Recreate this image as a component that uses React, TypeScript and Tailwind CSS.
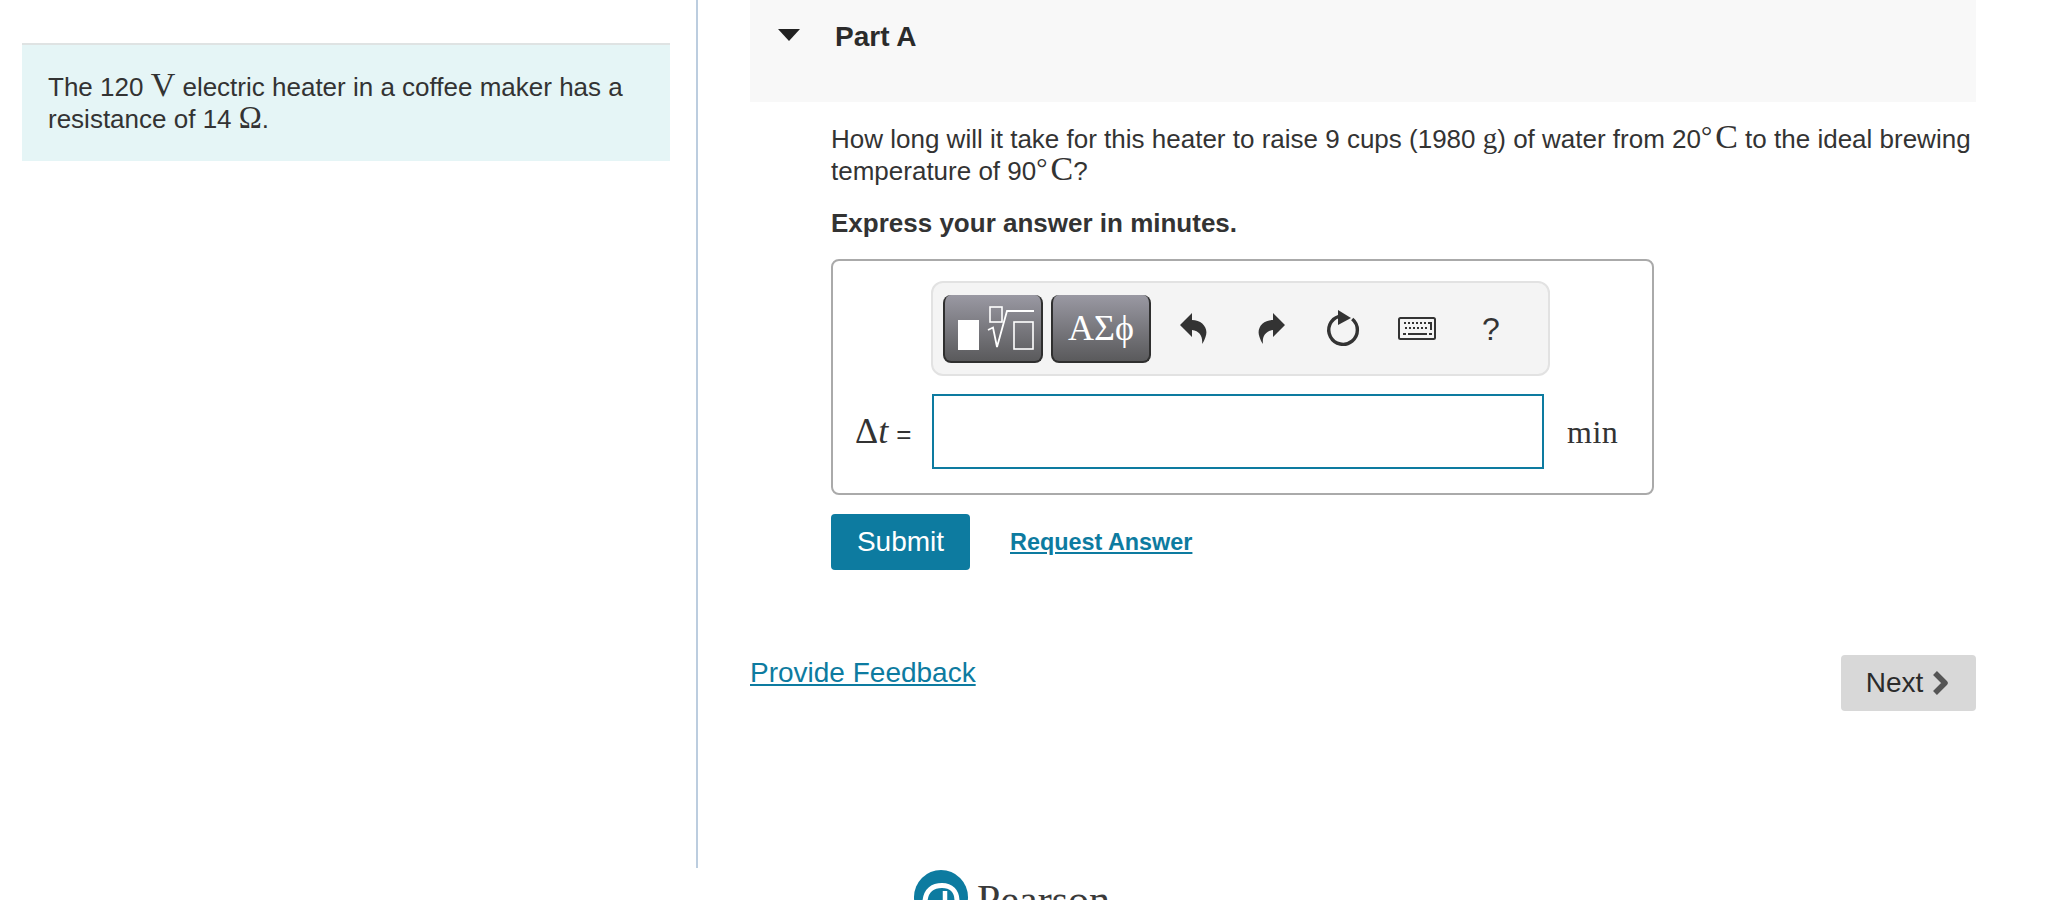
import React from "react";

const SANS = "font-['Liberation_Sans',Arial,sans-serif]";
const SERIF = "font-['Liberation_Serif','Times_New_Roman',serif]";

// Serif glyphs for units and variables inside the running text
function M({ children, size = "text-[34px]" }: { children: React.ReactNode; size?: string }) {
  return <span className={`${SERIF} ${size} leading-[0]`}>{children}</span>;
}

function Deg() {
  return <span className={`${SERIF} mr-[3px] align-[3px] text-[28px] leading-[0]`}>°</span>;
}

function UndoIcon({ flip }: { flip?: boolean }) {
  return (
    <svg width="27" height="31" viewBox="0 0 27 31" className={flip ? "-scale-x-100" : ""}>
      <path
        d="M0 12 L12 0 V7 C22 7 29 15 25.5 24 C24.5 27 23.5 29 22 31 C23 24 20 18 12 17 V24 Z"
        fill="#333"
      />
    </svg>
  );
}

function RefreshIcon() {
  return (
    <svg width="36" height="38" viewBox="0 0 36 38">
      <path d="M27.2 9 A14.3 14.3 0 1 1 14 6.3" fill="none" stroke="#333" strokeWidth="3.4" />
      <path d="M13 0 L26 8 L13 15 Z" fill="#333" />
    </svg>
  );
}

function KeyboardIcon() {
  const top = [6, 10, 14, 18, 22, 26, 30];
  return (
    <svg width="38" height="23" viewBox="0 0 38 23">
      <rect x="1" y="1" width="36" height="21" rx="1.5" fill="#f4f4f4" stroke="#333" strokeWidth="2" />
      {top.map((x) => (
        <rect key={x} x={x} y="5" width="2" height="2" fill="#333" />
      ))}
      {top.slice(0, 6).map((x) => (
        <rect key={x} x={x + 1} y="10" width="2" height="2" fill="#333" />
      ))}
      <rect x="32" y="5" width="2" height="8" fill="#333" />
      <rect x="5" y="16" width="3" height="2" fill="#333" />
      <rect x="10" y="16" width="19" height="2" fill="#333" />
      <rect x="31" y="16" width="3" height="2" fill="#333" />
    </svg>
  );
}

function TemplateIcon() {
  return (
    <svg width="100" height="68" viewBox="0 0 100 68" className="absolute -left-[2px] top-0">
      <rect x="15" y="25" width="21" height="30" fill="#fff" />
      <rect x="47" y="12" width="12" height="15" fill="none" stroke="#fff" strokeWidth="1.6" />
      <path d="M45 35 L50 32.5 L54 52 L64 16 H91" fill="none" stroke="#fff" strokeWidth="1.8" />
      <rect x="71" y="27" width="19" height="27" fill="none" stroke="#fff" strokeWidth="1.6" />
    </svg>
  );
}

function PearsonLogo() {
  return (
    <svg width="54" height="54" viewBox="0 0 54 54" className="shrink-0">
      <circle cx="27" cy="27" r="27" fill="#0d7ba0" />
      <path d="M11 31 C12 20 19 15.5 28 15.5 C37 15.5 43 21 43 31" fill="none" stroke="#fff" strokeWidth="5" />
      <path d="M31 21 V36" fill="none" stroke="#fff" strokeWidth="4.5" />
    </svg>
  );
}

export default function App() {
  return (
    <div className={`h-[900px] overflow-hidden bg-white text-[#333] text-[26px] leading-[32px] ${SANS}`}>
      <div className="flex h-[868px]">
        {/* Intro column */}
        <div className="w-[698px] shrink-0 border-r-2 border-[#bccddf] pl-[22px] pr-[26px] pt-[43px]">
          <div className="h-[118px] border-t-2 border-[#dfe3e3] bg-[#e5f5f6] px-[26px] pt-[26px]">
            The 120 <M>V</M> electric heater in a coffee maker has a resistance of 14 <M size="text-[31px]">Ω</M>.
          </div>
        </div>

        {/* Question column */}
        <div className="ml-[52px] w-[1226px]">
          <div className="flex h-[102px] items-start bg-[#f8f8f8] pt-[21px]">
            <span className="ml-[28px] mt-[8px] h-0 w-0 border-x-[11px] border-t-[12px] border-x-transparent border-t-[#222]" />
            <span className="ml-[35px] text-[28px] font-bold text-[#2b2b2b]">Part A</span>
          </div>

          <div className="pl-[81px]">
            <p className="mt-[21px]">
              How long will it take for this heater to raise 9 cups (1980 <M size="text-[29px]">g</M>) of water from 20
              <Deg />
              <M>C</M> to the ideal brewing temperature of 90
              <Deg />
              <M>C</M>?
            </p>
            <p className="mt-[20px] font-bold">Express your answer in minutes.</p>

            {/* Answer box */}
            <div className="mt-[20px] h-[236px] w-[823px] rounded-lg border-2 border-[#aaa] pt-[20px]">
              <div className="ml-[98px] flex h-[95px] w-[619px] items-center rounded-xl border-2 border-[#e2e2e2] bg-[#f4f4f4] pl-[10px]">
                <button className="relative h-[68px] w-[100px] rounded-lg border-2 border-t-0 border-[#2f2f2f] bg-gradient-to-b from-[#9a99a3] to-[#5a5a5c]">
                  <TemplateIcon />
                </button>
                <button
                  className={`ml-[8px] h-[68px] w-[100px] rounded-lg border-2 border-t-0 border-[#2f2f2f] bg-gradient-to-b from-[#9a99a3] to-[#5a5a5c] text-[36px] leading-none text-white ${SERIF}`}
                >
                  ΑΣϕ
                </button>
                <span className="ml-[29px]">
                  <UndoIcon />
                </span>
                <span className="ml-[51px]">
                  <UndoIcon flip />
                </span>
                <span className="ml-[40px]">
                  <RefreshIcon />
                </span>
                <span className="ml-[37px]">
                  <KeyboardIcon />
                </span>
                <span className="ml-[46px] text-[32px]">?</span>
              </div>

              <div className="mt-[18px] flex items-center pl-[22px]">
                <span className="flex w-[77px] items-baseline whitespace-nowrap">
                  <span className={`${SERIF} text-[36px] leading-none`}>
                    Δ<i>t</i>
                  </span>
                  <span className="ml-[8px] text-[26px]">=</span>
                </span>
                <input className="h-[75px] w-[612px] border-2 border-[#0d7ba0] outline-none" />
                <span className={`ml-[23px] text-[32px] leading-[32px] tracking-[0.5px] ${SERIF}`}>min</span>
              </div>
            </div>

            <div className="mt-[19px] flex items-center">
              <button className="h-[56px] w-[139px] rounded bg-[#0d7ba0] text-[28px] text-white">Submit</button>
              <a className="ml-[40px] text-[23.4px] font-bold text-[#0d7ba0] underline">Request Answer</a>
            </div>
          </div>

          <div className="mt-[85px] flex items-start justify-between">
            <a className="mt-[2px] text-[28px] leading-[32px] text-[#0d7ba0] underline">Provide Feedback</a>
            <button className="flex h-[56px] w-[135px] items-center justify-center rounded bg-[#d8d8d8] text-[28px] text-[#2b2b2b]">
              Next
              <svg width="20" height="26" viewBox="0 0 20 26" className="ml-[8px]">
                <path d="M4 3 L14 13 L4 23" fill="none" stroke="#555" strokeWidth="5.5" strokeLinejoin="round" />
              </svg>
            </button>
          </div>
        </div>
      </div>

      {/* Footer logo, cut off by the fold */}
      <div className="ml-[914px] mt-[2px] flex items-start">
        <PearsonLogo />
        <span className={`ml-[9px] mt-[6px] text-[42px] leading-[48px] text-[#3a3a3a] ${SERIF}`}>Pearson</span>
      </div>
    </div>
  );
}
